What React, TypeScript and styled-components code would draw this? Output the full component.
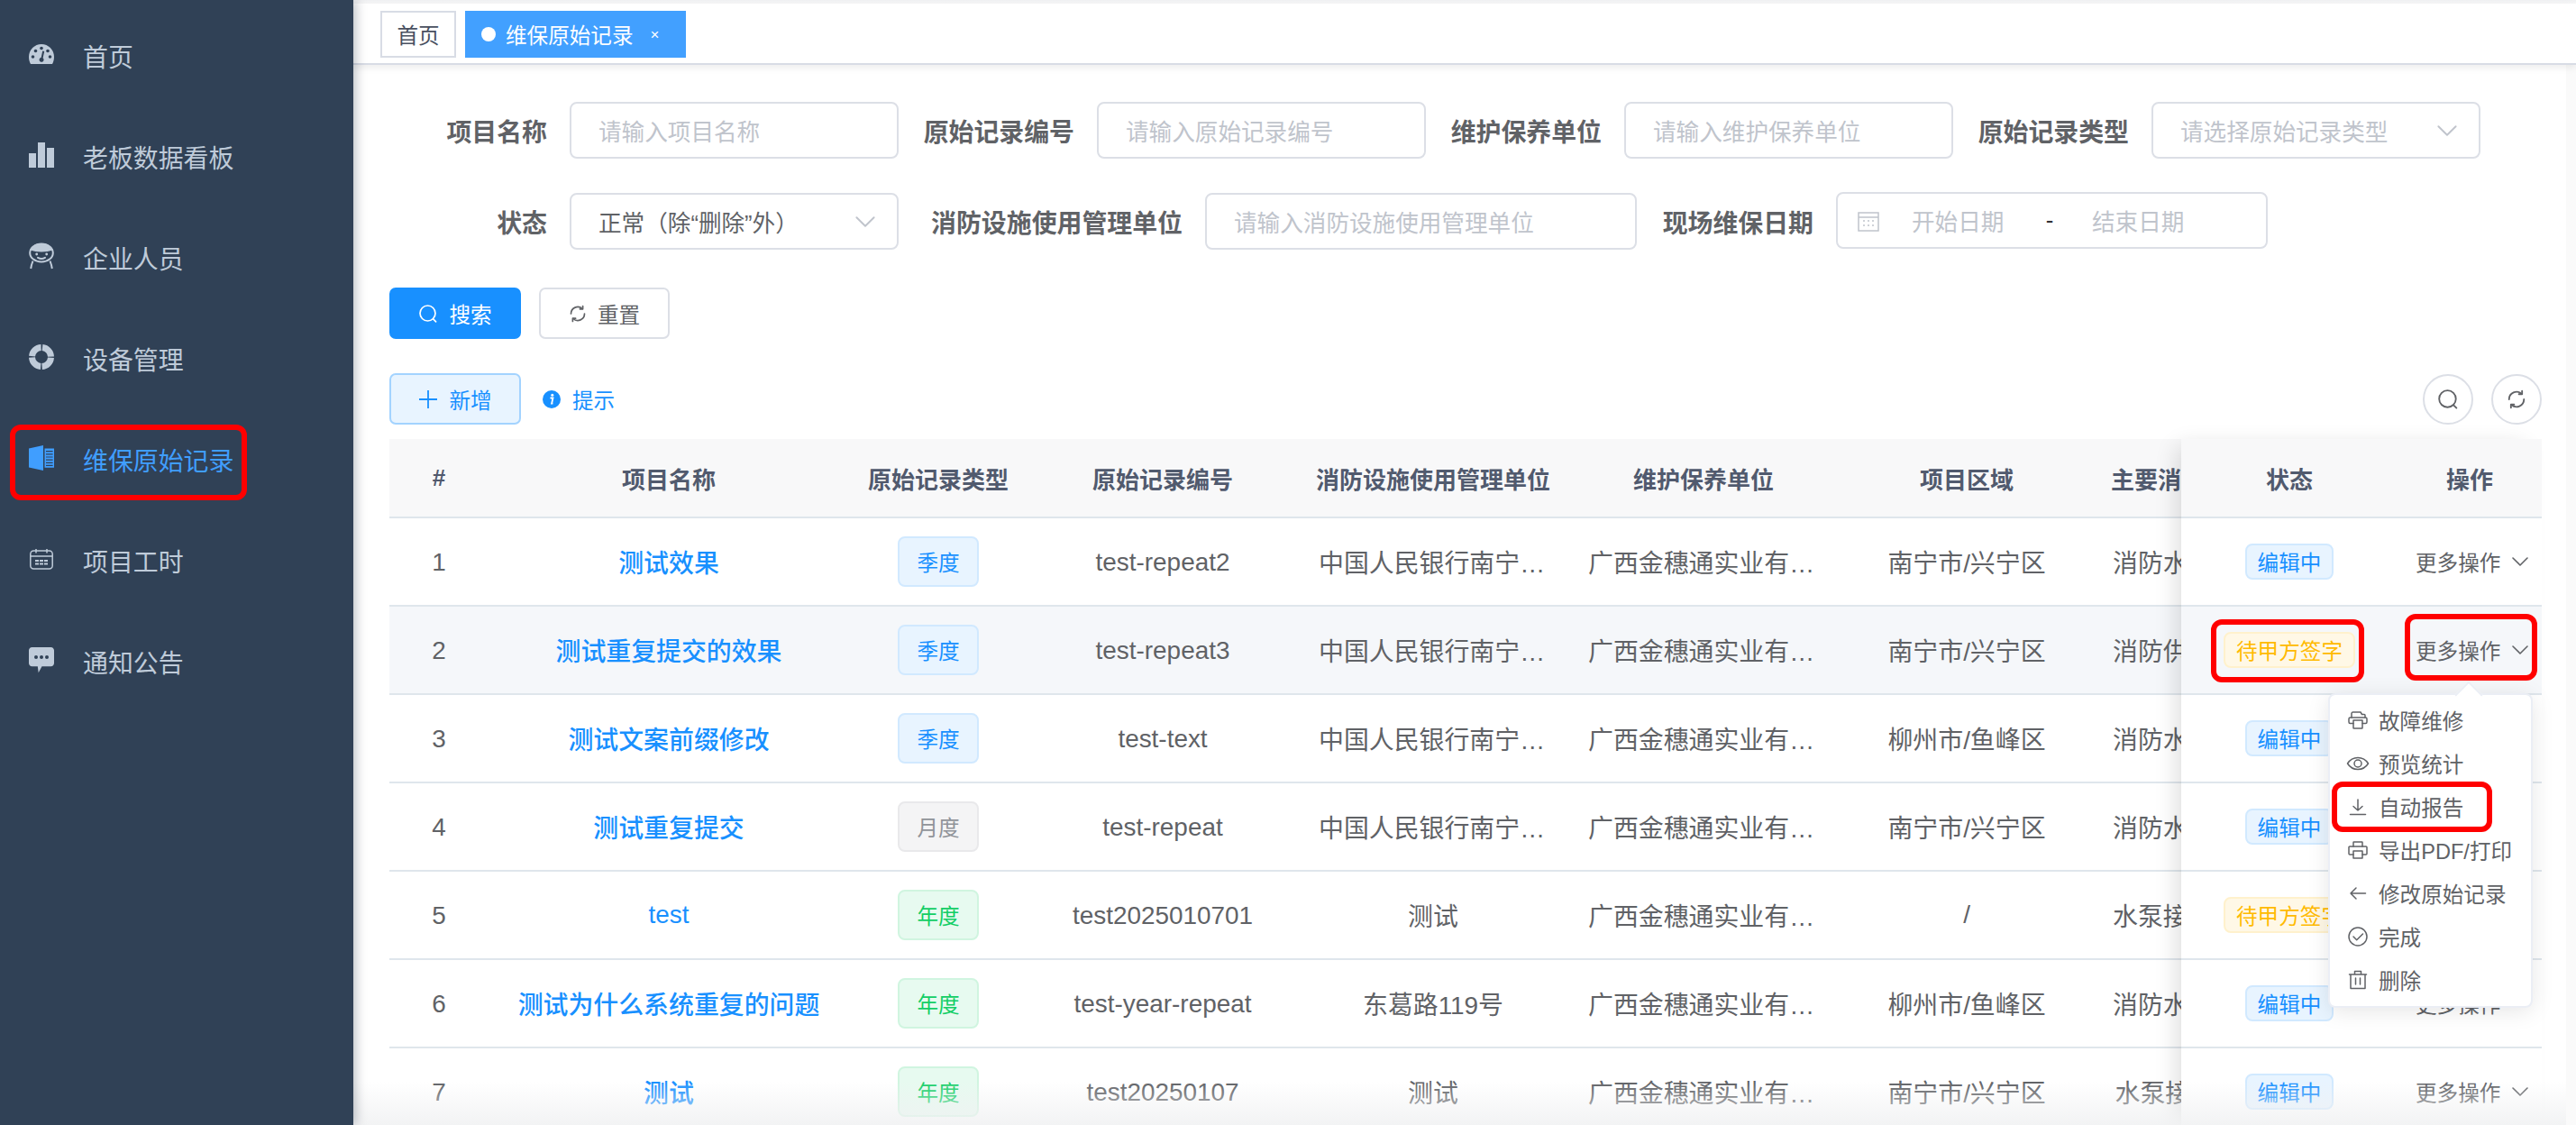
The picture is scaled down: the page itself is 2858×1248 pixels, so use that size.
import React from 'react';
import styled, { createGlobalStyle } from 'styled-components';

const GlobalStyle = createGlobalStyle`
    html, body {
        margin: 0;
        padding: 0;
        height: 100%;
        overflow: hidden;
        background: #fff;
    }
    body {
        font-family: "Liberation Sans", "Noto Sans CJK SC", sans-serif;
        color: #606266;
    }
    * {
        box-sizing: border-box;
    }
`;

const Page = styled.div`
    position: relative;
    display: flex;
    width: 2858px;
    height: 1248px;
    overflow: hidden;
`;

const Sidebar = styled.nav`
    position: relative;
    z-index: 5;
    flex: 0 0 392px;
    padding-top: 6px;
    background: #304156;
    box-shadow: 2px 0 12px rgba(0, 21, 41, 0.3);
`;

const NavItem = styled.div<{ $active?: boolean }>`
    position: relative;
    display: flex;
    align-items: center;
    gap: 32px;
    height: 112px;
    padding-left: 32px;
    font-size: 27.9px;
    color: ${p => (p.$active ? '#409eff' : '#bfcbd9')};
`;

const NavIcon = styled.svg`
    flex: 0 0 28px;
    width: 28px;
    height: 28px;
    margin-top: -4px;
    overflow: visible;
    fill: currentColor;
`;

const RedBox = styled.div<{ $inset: string }>`
    position: absolute;
    inset: ${p => p.$inset};
    border: 6px solid #ff0000;
    border-radius: 12px;
    pointer-events: none;
`;

const Main = styled.main`
    flex: 1;
    min-width: 0;
    display: flex;
    flex-direction: column;
`;

const TopStrip = styled.div`
    height: 4px;
    background: linear-gradient(#f0f1f3, #f8f8f9);
`;

const TabBar = styled.div`
    position: relative;
    z-index: 2;
    display: flex;
    align-items: flex-start;
    gap: 10px;
    height: 68px;
    padding: 8px 0 0 30px;
    background: #fff;
    border-bottom: 2px solid #d8dce5;
    box-shadow: 0 3px 8px rgba(0, 0, 0, 0.08);
`;

const HomeTab = styled.div`
    display: flex;
    align-items: center;
    justify-content: center;
    width: 84px;
    height: 52px;
    border: 2px solid #d8dce5;
    font-size: 23.6px;
    color: #495060;
`;

const ActiveTab = styled.div`
    display: flex;
    align-items: center;
    width: 245px;
    height: 52px;
    padding-left: 18px;
    background: #42a0ff;
    font-size: 23.6px;
    color: #fff;
`;

const TabDot = styled.span`
    width: 16px;
    height: 16px;
    margin-right: 11px;
    border-radius: 50%;
    background: #fff;
`;

const TabClose = styled.span`
    margin-left: 19px;
    font-size: 17px;
    line-height: 1;
`;

const Content = styled.div`
    flex: 1;
    min-height: 0;
    display: flex;
    padding: 41px 38px 0 40px;
`;

const ContentInner = styled.div`
    width: 2388px;
    display: flex;
    flex-direction: column;
`;

const FilterRow = styled.div<{ $mb: number }>`
    display: flex;
    align-items: center;
    height: 63px;
    margin-bottom: ${p => p.$mb}px;
`;

const FieldLabel = styled.label<{ $width: number; $left: number }>`
    flex: 0 0 ${p => p.$width}px;
    margin: 0 25px 0 ${p => p.$left}px;
    text-align: right;
    font-size: 27.9px;
    font-weight: 700;
    color: #606266;
    white-space: nowrap;
`;

const Field = styled.div<{ $width: number }>`
    display: flex;
    align-items: center;
    justify-content: space-between;
    flex: 0 0 ${p => p.$width}px;
    height: 63px;
    padding: 0 24px 0 30px;
    border: 2px solid #dcdfe6;
    border-radius: 8px;
    font-size: 25.6px;
    white-space: nowrap;
`;

const Placeholder = styled.span`
    color: #c0c4cc;
`;

const FieldValue = styled.span`
    color: #606266;
`;

const DateField = styled(Field)`
    justify-content: flex-start;
    padding: 0 0 0 21px;
    margin-top: -2px;
`;

const DateIcon = styled.svg`
    flex: none;
    width: 26px;
    height: 26px;
    margin-right: 35px;
    fill: none;
    stroke: #c0c4cc;
    stroke-width: 1.5;
`;

const DateSep = styled.span`
    width: 94px;
    text-align: center;
    color: #303133;
`;

const DatePart = styled(Placeholder)`
    width: 106px;
`;

const Chevron = styled.svg`
    flex: none;
    fill: none;
    stroke: currentColor;
    stroke-width: 1.6;
    stroke-linecap: round;
    stroke-linejoin: round;
`;

const FieldChevron = styled(Chevron)`
    width: 22px;
    height: 12px;
    color: #c0c4cc;
`;

const ButtonRow = styled.div`
    display: flex;
    gap: 20px;
`;

const Button = styled.button<{ $kind?: 'primary' | 'plain' }>`
    display: flex;
    align-items: center;
    justify-content: center;
    gap: 12px;
    width: ${p => (p.$kind === 'plain' ? '145px' : '146px')};
    height: 57px;
    padding: 0;
    border-radius: 7px;
    font-family: inherit;
    font-size: 23.6px;
    border: 2px solid ${p => {
        if (p.$kind === 'primary') return '#1890ff';
        if (p.$kind === 'plain') return '#dcdfe6';
        return '#a3d3ff';
    }};
    background: ${p => {
        if (p.$kind === 'primary') return '#1890ff';
        if (p.$kind === 'plain') return '#fff';
        return '#e8f4ff';
    }};
    color: ${p => {
        if (p.$kind === 'primary') return '#fff';
        if (p.$kind === 'plain') return '#606266';
        return '#1890ff';
    }};
`;

const Toolbar = styled.div`
    display: flex;
    align-items: center;
    margin-top: 38px;
    height: 57px;
`;

const Hint = styled.div`
    display: flex;
    align-items: center;
    gap: 13px;
    margin-left: 24px;
    font-size: 23.6px;
    color: #1890ff;
`;

const ToolIcons = styled.div`
    display: flex;
    gap: 20px;
    margin-left: auto;
`;

const CircleButton = styled.div`
    display: flex;
    align-items: center;
    justify-content: center;
    width: 56px;
    height: 56px;
    border: 2px solid #dcdfe6;
    border-radius: 50%;
    color: #606266;
`;

const TableWrap = styled.div`
    display: flex;
    margin-top: 16px;
`;

const ScrollPane = styled.div`
    flex: 0 0 1988px;
    overflow: hidden;
`;

const FixedPane = styled.div`
    position: relative;
    z-index: 1;
    flex: 0 0 400px;
    background: #fff;
    box-shadow: -12px 0 24px -8px rgba(0, 0, 0, 0.14);
`;

const mainColumns = '110px 400px 198px 300px 300px 300px 284px 296px';
const fixedColumns = '240px 160px';

const Row = styled.div<{ $columns: string; $head?: boolean; $hover?: boolean }>`
    display: grid;
    grid-template-columns: ${p => p.$columns};
    align-items: center;
    width: max-content;
    min-width: 100%;
    height: ${p => (p.$head ? '88px' : '98px')};
    border-bottom: 2px solid #dfe6ec;
    background: ${p => {
        if (p.$head) return '#f8f8f9';
        return p.$hover ? '#f5f7fa' : '#fff';
    }};
    ${p => (p.$head ? 'font-size: 26px; font-weight: 700; color: #515a6e;' : 'font-size: 27.9px; color: #606266;')}
`;

const Cell = styled.div<{ $pad?: number }>`
    padding: 0 ${p => p.$pad ?? 10}px;
    text-align: center;
    white-space: nowrap;
    overflow: hidden;
    text-overflow: ellipsis;
`;

// latin text sits a little high next to the CJK cells
const LatinCell = styled(Cell)`
    padding-top: 2px;
`;

const ProjectLink = styled(Cell)`
    color: #1890ff;
    font-weight: 500;
`;

const TagCell = styled.div`
    display: flex;
    justify-content: center;
`;

const tagColors = {
    blue: { bg: '#e8f4ff', border: '#d1e9ff', text: '#1890ff' },
    gray: { bg: '#f4f4f5', border: '#e9e9eb', text: '#909399' },
    green: { bg: '#e7faf0', border: '#d0f5e0', text: '#13ce66' },
    yellow: { bg: '#fff8e6', border: '#fff1cc', text: '#ffba00' },
};

type TagColor = keyof typeof tagColors;

const TypeTag = styled.span<{ $color: TagColor }>`
    display: flex;
    align-items: center;
    justify-content: center;
    width: 90px;
    height: 56px;
    border: 2px solid ${p => tagColors[p.$color].border};
    border-radius: 8px;
    background: ${p => tagColors[p.$color].bg};
    color: ${p => tagColors[p.$color].text};
    font-size: 23.6px;
`;

const StatusTag = styled.span<{ $color: TagColor }>`
    position: relative;
    display: flex;
    align-items: center;
    justify-content: center;
    height: 40px;
    padding: 0 12px;
    border: 2px solid ${p => tagColors[p.$color].border};
    border-radius: 8px;
    background: ${p => tagColors[p.$color].bg};
    color: ${p => tagColors[p.$color].text};
    font-size: 23.6px;
    white-space: nowrap;
`;

const ActionCell = styled.div`
    display: flex;
    padding-left: 20px;
`;

const ActionTrigger = styled.div`
    position: relative;
    display: flex;
    align-items: center;
    gap: 13px;
    height: 28px;
    font-size: 23.6px;
    color: #606266;
    white-space: nowrap;
`;

const Dropdown = styled.div`
    position: absolute;
    z-index: 10;
    top: 62px;
    left: -97px;
    width: 227px;
    padding: 4px 0 5px;
    border: 2px solid #ebeef5;
    border-radius: 8px;
    background: #fff;
    box-shadow: 0 4px 24px rgba(0, 0, 0, 0.1);

    &::before {
        content: '';
        position: absolute;
        top: -11px;
        left: 143px;
        width: 20px;
        height: 20px;
        background: #fff;
        border-top: 2px solid #ebeef5;
        border-left: 2px solid #ebeef5;
        transform: rotate(45deg);
    }
`;

const MenuItem = styled.div`
    position: relative;
    display: flex;
    align-items: center;
    gap: 12px;
    height: 48px;
    padding-left: 20px;
    font-size: 23.6px;
    color: #606266;
    white-space: nowrap;
`;

const MenuIcon = styled.svg`
    flex: 0 0 22px;
    width: 22px;
    height: 22px;
    overflow: visible;
    fill: none;
    stroke: currentColor;
    stroke-width: 1.5;
    stroke-linecap: round;
    stroke-linejoin: round;
`;

const BottomFade = styled.div`
    position: absolute;
    z-index: 4;
    left: 392px;
    right: 11px;
    bottom: 0;
    height: 48px;
    background: linear-gradient(rgba(240, 241, 242, 0), rgba(240, 241, 242, 0.85));
    pointer-events: none;
`;

const ScrollTrack = styled.div`
    position: absolute;
    z-index: 1;
    top: 72px;
    right: 0;
    bottom: 0;
    width: 11px;
    background: #fafafa;
`;

const SearchIcon = ({ size = 22 }: { size?: number }) => (
    <svg width={size} height={size} viewBox="0 0 22 22" fill="none" stroke="currentColor" strokeWidth="1.7" strokeLinecap="round">
        <circle cx="10.5" cy="10.5" r="8.5" />
        <path d="M16.6 16.8l3 3" />
    </svg>
);

const RefreshIcon = ({ size = 20 }: { size?: number }) => (
    <svg width={size} height={size} viewBox="0 0 20 20" fill="none" stroke="currentColor" strokeWidth="1.7" strokeLinecap="round" strokeLinejoin="round">
        <path d="M2.5 10a7.5 7.5 0 0 1 12.6-5.5" />
        <path d="M17.5 10a7.5 7.5 0 0 1-12.6 5.5" />
        <path d="M15.6 1.6v3.2h-3.2" />
        <path d="M4.4 18.4v-3.2h3.2" />
    </svg>
);

const navDark = '#304156';

const navItems = [
    {
        label: '首页',
        icon: (
            <>
                <path d="M14 3C6.300 3 0 9.300 0 17c0 2.900.7 5.600 2 8h24c1.300-2.400 2-5.100 2-8 0-7.700-6.300-14-14-14z" />
                <g fill={navDark}>
                    <circle cx="4.500" cy="17" r="1.800" />
                    <circle cx="7.500" cy="10.500" r="1.800" />
                    <circle cx="14" cy="7.500" r="1.800" />
                    <circle cx="21" cy="10.500" r="1.800" />
                    <circle cx="23.500" cy="17" r="1.800" />
                    <path d="M15.200 10.500l2 .6-1.600 7.200c1 .8 1.200 2.100.7 3.200-.7 1.300-2.200 1.700-3.500 1-1.200-.7-1.600-2.300-.9-3.500.4-.8 1.100-1.200 1.800-1.300z" />
                </g>
            </>
        ),
    },
    {
        label: '老板数据看板',
        icon: (
            <>
                <rect x="0" y="12" width="8" height="16" />
                <rect x="10" y="0" width="8" height="28" />
                <rect x="20" y="6" width="8" height="22" />
            </>
        ),
    },
    {
        label: '企业人员',
        icon: (
            <>
                <path d="M14 0C7.500 0 2.200 3.300 1.300 7.500c4 1.300 8.200 1.900 12.700 1.900s8.700-.6 12.700-1.900C25.800 3.300 20.500 0 14 0z" />
                <g fill="none" stroke="currentColor" strokeWidth="2">
                    <ellipse cx="14" cy="10.500" rx="12.800" ry="10" />
                    <path d="M4.500 19.500c-1 2.500-1.800 5-2.300 8.500M23.500 19.500c1 2.500 1.800 5 2.300 8.500" />
                    <path d="M10 15.800c2.400 1.500 5.600 1.500 8 0" strokeLinecap="round" />
                </g>
                <circle cx="8.700" cy="12" r="1.400" />
                <circle cx="19.700" cy="12" r="1.400" />
            </>
        ),
    },
    {
        label: '设备管理',
        icon: <circle cx="14" cy="14" r="10.500" fill="none" stroke="currentColor" strokeWidth="7" strokeDasharray="15 1.500" strokeDashoffset="-0.750" />,
    },
    {
        label: '维保原始记录',
        active: true,
        icon: (
            <>
                <path d="M0 3.500L16 0v28L0 24.500z" />
                <path fillRule="evenodd" d="M17.500 3.500H28v21.200H17.500zM19 6v1.200h7.600V6zm0 3.200v1.200h7.600V9.200zm0 3.200v1.200h7.600v-1.200zm0 3.200v1.200h7.600v-1.200zm0 3.200v1.200h7.600v-1.200zm0 3v1.200h7.600v-1.200z" />
            </>
        ),
    },
    {
        label: '项目工时',
        icon: (
            <>
                <g fill="none" stroke="currentColor" strokeWidth="1.500">
                    <rect x="1.800" y="5" width="24.400" height="20" rx="3.500" />
                    <path d="M1.800 11h24.400M8 3v4.500M20 3v4.500" />
                </g>
                <rect x="7" y="15" width="4" height="2" />
                <rect x="12" y="15" width="4" height="2" />
                <rect x="17" y="15" width="4" height="2" />
                <rect x="7" y="18.500" width="4" height="2" />
                <rect x="12" y="18.500" width="4" height="2" />
                <rect x="17" y="18.500" width="4" height="2" />
            </>
        ),
    },
    {
        label: '通知公告',
        icon: (
            <>
                <path d="M3.500 0h21C26.400 0 28 1.600 28 3.500v14.200c0 1.900-1.600 3.500-3.500 3.500h-10l-3.800 7-.9-7H3.500C1.600 21.200 0 19.600 0 17.700V3.500C0 1.600 1.600 0 3.500 0z" />
                <g fill={navDark}>
                    <circle cx="8" cy="11" r="2" />
                    <circle cx="14" cy="11" r="2" />
                    <circle cx="20" cy="11" r="2" />
                </g>
            </>
        ),
    },
];

const rows: {
    name: string;
    type: string;
    typeColor: TagColor;
    code: string;
    owner: string;
    area: string;
    system: string;
    status: string;
    statusColor: TagColor;
}[] = [
    { name: '测试效果', type: '季度', typeColor: 'blue', code: 'test-repeat2', owner: '中国人民银行南宁中心支行', area: '南宁市/兴宁区', system: '消防水泵接合器及消防水箱', status: '编辑中', statusColor: 'blue' },
    { name: '测试重复提交的效果', type: '季度', typeColor: 'blue', code: 'test-repeat3', owner: '中国人民银行南宁中心支行', area: '南宁市/兴宁区', system: '消防供水设施及消防水箱等', status: '待甲方签字', statusColor: 'yellow' },
    { name: '测试文案前缀修改', type: '季度', typeColor: 'blue', code: 'test-text', owner: '中国人民银行南宁中心支行', area: '柳州市/鱼峰区', system: '消防水泵接合器及消防水箱', status: '编辑中', statusColor: 'blue' },
    { name: '测试重复提交', type: '月度', typeColor: 'gray', code: 'test-repeat', owner: '中国人民银行南宁中心支行', area: '南宁市/兴宁区', system: '消防水泵接合器及消防水箱', status: '编辑中', statusColor: 'blue' },
    { name: 'test', type: '年度', typeColor: 'green', code: 'test2025010701', owner: '测试', area: '/', system: '水泵接合器及消防水箱设施', status: '待甲方签字', statusColor: 'yellow' },
    { name: '测试为什么系统重复的问题', type: '年度', typeColor: 'green', code: 'test-year-repeat', owner: '东葛路119号', area: '柳州市/鱼峰区', system: '消防水泵接合器及消防水箱', status: '编辑中', statusColor: 'blue' },
    { name: '测试', type: '年度', typeColor: 'green', code: 'test20250107', owner: '测试', area: '南宁市/兴宁区', system: '水泵接合器及水箱等', status: '编辑中', statusColor: 'blue' },
];

const menuItems = [
    {
        label: '故障维修',
        icon: (
            <>
                <path d="M4 8V3.500C4 2.700 4.700 2 5.500 2H14l1.500 2.500H18c.6 0 1 .4 1 1V8" />
                <path d="M6 14.500H2.500c-.8 0-1.500-.7-1.500-1.500V9.500C1 8.700 1.700 8 2.500 8h17c.8 0 1.500.7 1.500 1.500V13c0 .8-.7 1.500-1.500 1.500H16" />
                <path d="M6 11h10v8.500c0 .3-.2.500-.5.500h-9c-.3 0-.5-.2-.5-.5z" />
            </>
        ),
    },
    {
        label: '预览统计',
        icon: (
            <>
                <path d="M-.5 11c2.700-4.300 6.500-6.500 11.500-6.500s8.800 2.200 11.500 6.500c-2.700 4.300-6.500 6.500-11.500 6.500S2.200 15.300-.5 11z" />
                <circle cx="11" cy="11" r="4" />
            </>
        ),
    },
    {
        label: '自动报告',
        marked: true,
        icon: <path d="M11 3v12M6 10.500L11 15l5-4.500M2.500 19.500h17" />,
    },
    {
        label: '导出PDF/打印',
        icon: (
            <>
                <path d="M6 7V2.500C6 2.200 6.200 2 6.500 2h9c.3 0 .5.200.5.500V7" />
                <path d="M6 16H2c-.6 0-1-.4-1-1V8c0-.6.4-1 1-1h18c.6 0 1 .4 1 1v7c0 .6-.4 1-1 1h-4" />
                <path d="M6 12h10v8H6z" />
            </>
        ),
    },
    {
        label: '修改原始记录',
        icon: <path d="M19.500 11H3M9 5l-6 6 6 6" />,
    },
    {
        label: '完成',
        icon: (
            <>
                <circle cx="11" cy="11" r="10" />
                <path d="M6 11l3.700 3.700L16.500 8" />
            </>
        ),
    },
    {
        label: '删除',
        icon: <path d="M1.500 5h19M7.500 5V1.500h7V5M3 5v15.500h16V5M8.500 9v7M13.500 9v7" />,
    },
];

const App: React.FC = () => {
    return (
        <Page>
            <GlobalStyle />
            <Sidebar>
                {navItems.map(item => (
                    <NavItem key={item.label} $active={item.active}>
                        <NavIcon viewBox="0 0 28 28">{item.icon}</NavIcon>
                        {item.label}
                        {item.active && <RedBox $inset="17px 118px 11px 11px" />}
                    </NavItem>
                ))}
            </Sidebar>
            <Main>
                <TopStrip />
                <TabBar>
                    <HomeTab>首页</HomeTab>
                    <ActiveTab>
                        <TabDot />
                        维保原始记录
                        <TabClose>×</TabClose>
                    </ActiveTab>
                </TabBar>
                <Content>
                    <ContentInner>
                        <FilterRow $mb={38}>
                            <FieldLabel $width={175} $left={0}>项目名称</FieldLabel>
                            <Field $width={365}><Placeholder>请输入项目名称</Placeholder></Field>
                            <FieldLabel $width={168} $left={27}>原始记录编号</FieldLabel>
                            <Field $width={365}><Placeholder>请输入原始记录编号</Placeholder></Field>
                            <FieldLabel $width={168} $left={27}>维护保养单位</FieldLabel>
                            <Field $width={365}><Placeholder>请输入维护保养单位</Placeholder></Field>
                            <FieldLabel $width={168} $left={27}>原始记录类型</FieldLabel>
                            <Field $width={365}>
                                <Placeholder>请选择原始记录类型</Placeholder>
                                <FieldChevron viewBox="0 0 18 10">
                                    <path d="M1 1l8 8 8-8" />
                                </FieldChevron>
                            </Field>
                        </FilterRow>
                        <FilterRow $mb={42}>
                            <FieldLabel $width={175} $left={0}>状态</FieldLabel>
                            <Field $width={365}>
                                <FieldValue>正常（除“删除”外）</FieldValue>
                                <FieldChevron viewBox="0 0 18 10">
                                    <path d="M1 1l8 8 8-8" />
                                </FieldChevron>
                            </Field>
                            <FieldLabel $width={280} $left={35}>消防设施使用管理单位</FieldLabel>
                            <Field $width={479}><Placeholder>请输入消防设施使用管理单位</Placeholder></Field>
                            <FieldLabel $width={168} $left={28}>现场维保日期</FieldLabel>
                            <DateField $width={479}>
                                <DateIcon viewBox="0 0 26 26">
                                    <path d="M2 4h22v20H2zM2 9h22M7 13h2M12 13h2M17 13h2M7 18h2M12 18h2M17 18h2" />
                                </DateIcon>
                                <DatePart>开始日期</DatePart>
                                <DateSep>-</DateSep>
                                <DatePart>结束日期</DatePart>
                            </DateField>
                        </FilterRow>
                        <ButtonRow>
                            <Button $kind="primary"><SearchIcon />搜索</Button>
                            <Button $kind="plain"><RefreshIcon />重置</Button>
                        </ButtonRow>
                        <Toolbar>
                            <Button>
                                <svg width="22" height="22" viewBox="0 0 22 22" stroke="currentColor" strokeWidth="1.8">
                                    <path d="M11 1v20M1 11h20" />
                                </svg>
                                新增
                            </Button>
                            <Hint>
                                <svg width="20" height="20" viewBox="0 0 20 20">
                                    <circle cx="10" cy="10" r="10" fill="#1890ff" />
                                    <circle cx="10.800" cy="5.200" r="1.500" fill="#fff" />
                                    <path d="M8.500 8.500h3l-1.400 6.200h1.300" fill="none" stroke="#fff" strokeWidth="1.800" />
                                </svg>
                                提示
                            </Hint>
                            <ToolIcons>
                                <CircleButton><SearchIcon size={24} /></CircleButton>
                                <CircleButton><RefreshIcon size={22} /></CircleButton>
                            </ToolIcons>
                        </Toolbar>
                        <TableWrap>
                            <ScrollPane>
                                <Row $columns={mainColumns} $head>
                                    <Cell>#</Cell>
                                    <Cell>项目名称</Cell>
                                    <Cell>原始记录类型</Cell>
                                    <Cell>原始记录编号</Cell>
                                    <Cell $pad={8}>消防设施使用管理单位</Cell>
                                    <Cell>维护保养单位</Cell>
                                    <Cell>项目区域</Cell>
                                    <Cell $pad={8}>主要消防设施设备类型</Cell>
                                </Row>
                                {rows.map((row, index) => (
                                    <Row key={row.code} $columns={mainColumns} $hover={index === 1}>
                                        <LatinCell>{index + 1}</LatinCell>
                                        <ProjectLink>{row.name}</ProjectLink>
                                        <TagCell><TypeTag $color={row.typeColor}>{row.type}</TypeTag></TagCell>
                                        <LatinCell>{row.code}</LatinCell>
                                        <Cell $pad={23}>{row.owner}</Cell>
                                        <Cell $pad={22}>广西金穗通实业有限责任公司</Cell>
                                        <Cell>{row.area}</Cell>
                                        <Cell $pad={20}>{row.system}</Cell>
                                    </Row>
                                ))}
                            </ScrollPane>
                            <FixedPane>
                                <Row $columns={fixedColumns} $head>
                                    <Cell>状态</Cell>
                                    <Cell>操作</Cell>
                                </Row>
                                {rows.map((row, index) => (
                                    <Row key={row.code} $columns={fixedColumns} $hover={index === 1}>
                                        <TagCell>
                                            <StatusTag $color={row.statusColor}>
                                                {row.status}
                                                {index === 1 && <RedBox $inset="-16px -12px -18px -16px" />}
                                            </StatusTag>
                                        </TagCell>
                                        <ActionCell>
                                            <ActionTrigger>
                                                更多操作
                                                <Chevron width="18" height="10" viewBox="0 0 18 10">
                                                    <path d="M1 1l8 8 8-8" />
                                                </Chevron>
                                                {index === 1 && <RedBox $inset="-26px -10px -20px -12px" />}
                                                {index === 1 && (
                                                    <Dropdown>
                                                        {menuItems.map(item => (
                                                            <MenuItem key={item.label}>
                                                                <MenuIcon viewBox="0 0 22 22">{item.icon}</MenuIcon>
                                                                {item.label}
                                                                {item.marked && <RedBox $inset="-4px 43px -4px 2px" />}
                                                            </MenuItem>
                                                        ))}
                                                    </Dropdown>
                                                )}
                                            </ActionTrigger>
                                        </ActionCell>
                                    </Row>
                                ))}
                            </FixedPane>
                        </TableWrap>
                    </ContentInner>
                </Content>
            </Main>
            <ScrollTrack />
            <BottomFade />
        </Page>
    );
};

export default App;
